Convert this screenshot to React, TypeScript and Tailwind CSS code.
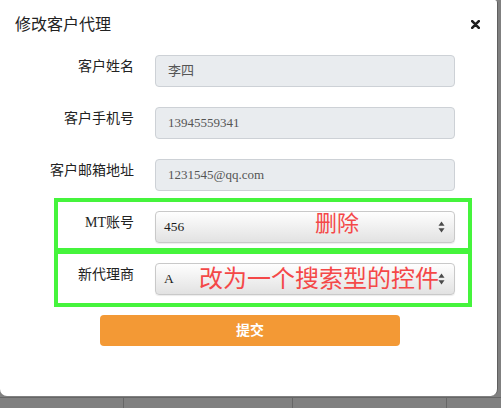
import React from "react";

const serif = { fontFamily: '"Liberation Serif", "Noto Sans CJK SC", serif' };
const sans = { fontFamily: '"Liberation Sans", "Noto Sans CJK SC", sans-serif' };

function Arrows() {
  return (
    <svg width="7" height="12" viewBox="0 0 7 12" className="absolute right-[9px] top-1/2 -translate-y-1/2">
      <path d="M3.5 0.5 L6.5 4.8 L0.5 4.8 Z" fill="#4a4a4a" />
      <path d="M3.5 11.5 L6.5 7.2 L0.5 7.2 Z" fill="#4a4a4a" />
    </svg>
  );
}

function InputRow({ label, value, mt }: { label: string; value: string; mt: string }) {
  return (
    <div className={`flex ${mt}`}>
      <div className="w-[134px] text-right text-[14px] leading-[20px] pt-[2px] text-[#222]" style={serif}>
        {label}
      </div>
      <div
        className="ml-[21px] w-[300px] h-[32px] rounded-[4px] border border-[#cdd1d6] bg-[#e9ecef] flex items-center pl-[12px] text-[13px] text-[#555]"
        style={serif}
      >
        {value}
      </div>
    </div>
  );
}

export default function App() {
  return (
    <div className="w-[501px] h-[408px] bg-[#808080] flex flex-col overflow-hidden">
      <div className="flex">
        <div className="w-[498px] h-[396px] bg-white rounded-b-[7px] rounded-tr-[3px] border-r border-[#5f5f5f] flex flex-col">
          <div className="flex items-center justify-between pl-[15px] pr-[17px] pt-[15px] h-[35px]">
            <div className="text-[16px] leading-[20px] text-[#222]" style={sans}>修改客户代理</div>
            <svg width="9" height="9" viewBox="0 0 9 9" className="mt-[-2px]">
              <path d="M1.2 1.2 L7.8 7.8 M7.8 1.2 L1.2 7.8" stroke="#1e1e1e" strokeWidth="2.6" strokeLinecap="round" />
            </svg>
          </div>

          <InputRow label="客户姓名" value="李四" mt="mt-[20px]" />
          <InputRow label="客户手机号" value="13945559341" mt="mt-[20px]" />
          <InputRow label="客户邮箱地址" value="1231545@qq.com" mt="mt-[20px]" />

          <div className="ml-[54px] mt-[7px] w-[418px] border-4 border-[#45f43c] pt-[9px] pb-[5px] flex">
            <div className="w-[76px] text-right text-[14px] leading-[20px] pt-[2px] text-[#222]" style={serif}>
              MT账号
            </div>
            <div
              className="relative ml-[21px] w-[300px] h-[32px] rounded-[4px] border border-[#c9c9c9] bg-gradient-to-b from-[#fefefe] to-[#e2e2e2] shadow-[0_1px_1px_rgba(0,0,0,0.08)] flex items-center pl-[8px] text-[13.5px] text-[#1a1a1a]"
              style={serif}
            >
              456
              <span className="absolute left-[159px] top-[1px] text-[22px] leading-none text-[#f44848]" style={sans}>
                删除
              </span>
              <Arrows />
            </div>
          </div>

          <div className="ml-[54px] mt-[-2px] w-[418px] border-4 border-[#45f43c] pt-[9px] pb-[8px] flex">
            <div className="w-[76px] text-right text-[14px] leading-[20px] pt-[2px] text-[#222]" style={serif}>
              新代理商
            </div>
            <div
              className="relative ml-[21px] w-[300px] h-[32px] rounded-[4px] border border-[#c9c9c9] bg-gradient-to-b from-[#fefefe] to-[#e2e2e2] shadow-[0_1px_1px_rgba(0,0,0,0.08)] flex items-center pl-[8px] text-[13.5px] text-[#1a1a1a]"
              style={serif}
            >
              A
              <span className="absolute left-[43px] top-[3px] text-[24px] leading-none text-[#f44848] whitespace-nowrap" style={sans}>
                改为一个搜索型的控件
              </span>
              <Arrows />
            </div>
          </div>

          <div
            className="ml-[100px] mt-[8px] w-[300px] h-[31px] rounded-[4px] bg-[#f39935] flex items-center justify-center text-white text-[14px] font-bold"
            style={sans}
          >
            提交
          </div>
        </div>
        <div className="flex-1" />
      </div>
      <div className="mt-[1px] flex-1 border-t border-[#666] flex">
        <div className="w-[124px] border-r border-[#666]" />
        <div className="w-[169px] border-r border-[#666]" />
        <div className="w-[154px] border-r border-[#666]" />
        <div className="flex-1" />
      </div>
    </div>
  );
}
